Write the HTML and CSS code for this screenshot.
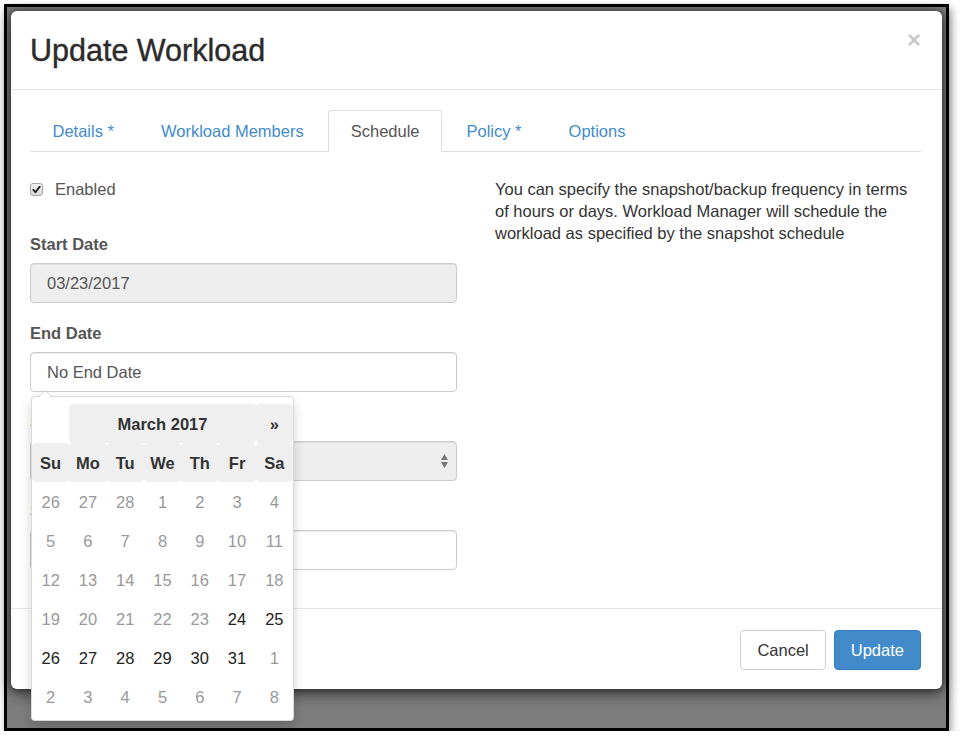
FILE: index.html
```html
<!DOCTYPE html>
<html lang="en">
<head>
<meta charset="utf-8">
<title>Update Workload</title>
<link rel="stylesheet" href="styles.css">
</head>
<body>
<div class="frame">
  <div class="modal">
    <div class="modal-header">
      <h4 class="modal-title">Update Workload</h4>
      <span class="close">&times;</span>
    </div>
    <div class="modal-body">
      <ul class="tabs">
        <li><a>Details *</a></li>
        <li><a>Workload Members</a></li>
        <li class="active"><a>Schedule</a></li>
        <li><a>Policy *</a></li>
        <li><a>Options</a></li>
      </ul>
      <div class="tab-pane">
        <div class="col-left">
          <div class="checkbox">
            <span class="cb"><svg width="13" height="13" viewBox="0 0 13 13"><defs><linearGradient id="cbg" x1="0" y1="0" x2="0" y2="1"><stop offset="0" stop-color="#f4f4f4"/><stop offset="1" stop-color="#d6d6d6"/></linearGradient></defs><rect x="0.5" y="0.5" width="12" height="12" rx="2.5" fill="url(#cbg)" stroke="#a8a8a8"/><path d="M3.3 6.8 L5.4 9.2 L9.8 3.6" fill="none" stroke="#222" stroke-width="1.8" stroke-linecap="round" stroke-linejoin="round"/></svg></span>
            <span>Enabled</span>
          </div>
          <div class="form-group">
            <label>Start Date</label>
            <div class="input readonly">03/23/2017</div>
          </div>
          <div class="form-group">
            <label>End Date</label>
            <div class="input">No End Date</div>
            <div class="datepicker">
              <table>
                <thead>
                  <tr>
                    <th class="prev"></th>
                    <th class="hd" colspan="5">March 2017</th>
                    <th class="hd">&raquo;</th>
                  </tr>
                  <tr>
                    <th class="hd">Su</th><th class="hd">Mo</th><th class="hd">Tu</th><th class="hd">We</th><th class="hd">Th</th><th class="hd">Fr</th><th class="hd">Sa</th>
                  </tr>
                </thead>
                <tbody>
                  <tr><td class="off">26</td><td class="off">27</td><td class="off">28</td><td class="off">1</td><td class="off">2</td><td class="off">3</td><td class="off">4</td></tr>
                  <tr><td class="off">5</td><td class="off">6</td><td class="off">7</td><td class="off">8</td><td class="off">9</td><td class="off">10</td><td class="off">11</td></tr>
                  <tr><td class="off">12</td><td class="off">13</td><td class="off">14</td><td class="off">15</td><td class="off">16</td><td class="off">17</td><td class="off">18</td></tr>
                  <tr><td class="off">19</td><td class="off">20</td><td class="off">21</td><td class="off">22</td><td class="off">23</td><td>24</td><td>25</td></tr>
                  <tr><td>26</td><td>27</td><td>28</td><td>29</td><td>30</td><td>31</td><td class="off">1</td></tr>
                  <tr><td class="off">2</td><td class="off">3</td><td class="off">4</td><td class="off">5</td><td class="off">6</td><td class="off">7</td><td class="off">8</td></tr>
                </tbody>
              </table>
            </div>
          </div>
          <div class="form-group">
            <label>Snapshot</label>
            <div class="input readonly select">
              <svg class="arrows" width="9" height="16" viewBox="0 0 9 16"><path d="M4.5 1 L8 7 L1 7 Z M4.5 15 L8 9 L1 9 Z" fill="#777"/></svg>
            </div>
          </div>
          <div class="form-group">
            <label>Start Time</label>
            <div class="input"></div>
          </div>
        </div>
        <div class="col-right">
          <p class="help">You can specify the snapshot/backup frequency in terms<br>of hours or days. Workload Manager will schedule the<br>workload as specified by the snapshot schedule</p>
        </div>
      </div>
    </div>
    <div class="modal-footer">
      <button class="btn">Cancel</button>
      <button class="btn primary">Update</button>
    </div>
  </div>
</div>
</body>
</html>
```

FILE: styles.css
```css
* {
  box-sizing: border-box;
}

body {
  margin: 0;
  background: #fff;
  font-family: "Liberation Sans", Arial, sans-serif;
  font-size: 16.5px;
  line-height: 22px;
  color: #333;
}

.frame {
  margin: 4px 0 0 4px;
  width: 945px;
  height: 727px;
  border: 3px solid #000;
  background: #7d7d7d;
  padding: 4px 0 0 4px;
  box-shadow: 2px 4px 8px rgba(0, 0, 0, 0.4);
}

.modal {
  position: relative;
  width: 931px;
  background: #fff;
  border-radius: 6px;
  box-shadow: 0 5px 15px rgba(0, 0, 0, 0.5), 0 0 6px 2px rgba(0, 0, 0, 0.35);
}

.modal-header {
  display: flex;
  justify-content: space-between;
  align-items: flex-start;
  padding: 24px 21px 23px 19px;
  border-bottom: 1px solid #e5e5e5;
}

.modal-title {
  margin: 0;
  font-size: 30.5px;
  line-height: 31px;
  font-weight: normal;
  color: #2b2b2b;
  -webkit-text-stroke: 0.4px #2b2b2b;
}

.close {
  font-size: 24px;
  font-weight: bold;
  line-height: 24px;
  color: #c8c8c8;
  margin-top: -7px;
}

.modal-body {
  padding: 20px 21px 19px 19px;
}

.tabs {
  display: flex;
  list-style: none;
  margin: 0;
  padding: 0;
  border-bottom: 1px solid #ddd;
}

.tabs li {
  margin-right: 2px;
  margin-bottom: -1px;
}

.tabs a {
  display: block;
  padding: 10px 21.5px;
  line-height: 20px;
  border: 1px solid transparent;
  border-radius: 4px 4px 0 0;
  color: #428bca;
}

.tabs .active a {
  color: #555;
  background: #fff;
  border-color: #ddd #ddd transparent;
}

.tab-pane {
  display: grid;
  grid-template-columns: 427px 426px;
  column-gap: 38px;
  padding-top: 26px;
}

.checkbox {
  display: flex;
  align-items: center;
  gap: 12px;
  height: 22px;
  margin-bottom: 33px;
  color: #555;
}

.cb {
  display: flex;
  width: 13px;
  height: 13px;
}

.form-group {
  position: relative;
  margin-bottom: 19px;
}

label {
  display: block;
  font-weight: bold;
  color: #555;
  line-height: 22px;
  margin-bottom: 8px;
}

.input {
  position: relative;
  height: 40px;
  border: 1px solid #ccc;
  border-radius: 4px;
  padding: 0 16px;
  line-height: 38px;
  color: #555;
  background: #fff;
  box-shadow: inset 0 1px 1px rgba(0, 0, 0, 0.075);
}

.readonly {
  background: #eee;
}

.arrows {
  position: absolute;
  right: 7px;
  top: 11px;
}

.help {
  margin: 0;
  color: #333;
  line-height: 22px;
}

.datepicker {
  position: absolute;
  z-index: 10;
  top: 74px;
  left: 1px;
  width: 263px;
  background: #fff;
  border: 1px solid rgba(0, 0, 0, 0.15);
  border-radius: 4px;
  box-shadow: 0 6px 12px rgba(0, 0, 0, 0.175);
  padding: 7px 0 4px;
}

.datepicker::before {
  content: "";
  position: absolute;
  top: -7px;
  left: 6px;
  border-left: 7px solid transparent;
  border-right: 7px solid transparent;
  border-bottom: 7px solid rgba(0, 0, 0, 0.15);
}

.datepicker::after {
  content: "";
  position: absolute;
  top: -6px;
  left: 7px;
  border-left: 6px solid transparent;
  border-right: 6px solid transparent;
  border-bottom: 6px solid #fff;
}

.datepicker table {
  width: 261px;
  border-collapse: separate;
  border-spacing: 0;
  table-layout: fixed;
}

.datepicker th,
.datepicker td {
  height: 39px;
  padding: 0;
  text-align: center;
  border-radius: 4px;
}

.datepicker th {
  font-weight: bold;
  color: #333;
}

.datepicker th.hd {
  background: #efefef;
}

.datepicker td {
  color: #222;
}

.datepicker td.off {
  color: #999;
}

.modal-footer {
  display: flex;
  justify-content: flex-end;
  gap: 8px;
  padding: 21px 21px 19px;
  border-top: 1px solid #e5e5e5;
}

.btn {
  height: 40px;
  padding: 0 16px;
  font-family: inherit;
  font-size: 16.5px;
  border-radius: 4px;
  border: 1px solid #ccc;
  background: #fff;
  color: #333;
}

.btn.primary {
  background: #428bca;
  border-color: #357ebd;
  color: #fff;
}
```
